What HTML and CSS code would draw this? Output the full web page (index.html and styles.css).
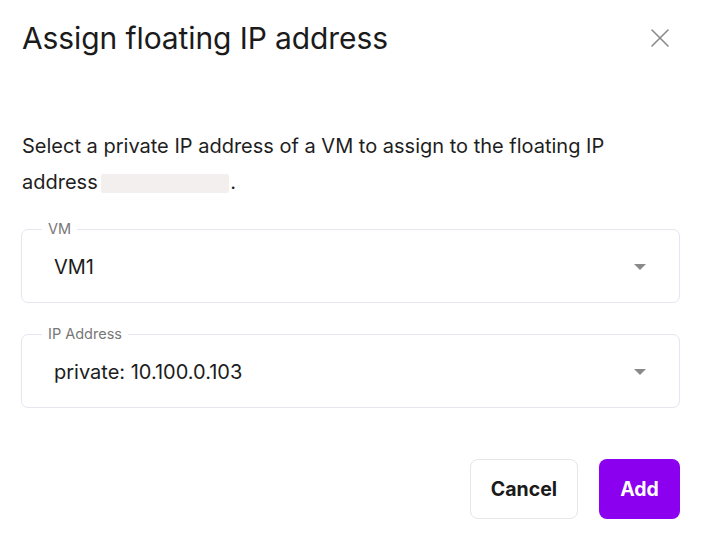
FILE: index.html
```html
<!DOCTYPE html>
<html lang="en">
<head>
<meta charset="utf-8">
<title>Assign floating IP address</title>
<link rel="stylesheet" href="styles.css">
</head>
<body>
<div class="dialog">
  <header class="dialog-header">
    <h1 class="dialog-title">Assign floating IP address</h1>
    <button class="close-btn" aria-label="Close">
      <svg width="20" height="20" viewBox="0 0 20 20"><path d="M2 2 L18 18 M18 2 L2 18" stroke="#8a8a8a" stroke-width="1.6" fill="none" stroke-linecap="round"/></svg>
    </button>
  </header>
  <p class="dialog-text">Select a private IP address of a VM to assign to the floating IP address <span class="redacted"></span>.</p>
  <fieldset class="field field-vm">
    <legend class="field-label">VM</legend>
    <div class="field-row">
      <span class="field-value">VM1</span>
      <span class="caret"></span>
    </div>
  </fieldset>
  <fieldset class="field field-ip">
    <legend class="field-label">IP Address</legend>
    <div class="field-row">
      <span class="field-value">private: 10.100.0.103</span>
      <span class="caret"></span>
    </div>
  </fieldset>
  <div class="actions">
    <button class="btn btn-cancel">Cancel</button>
    <button class="btn btn-add">Add</button>
  </div>
</div>
</body>
</html>
```
FILE: styles.css
```css
* { box-sizing: border-box; }
html, body { margin: 0; padding: 0; background: #ffffff; }
body { font-family: Inter, "Noto Sans", sans-serif; color: #1a1a1a; }

.dialog {
  width: 710px;
  height: 558px;
  padding: 18px 30px 0 21px;
}

.dialog-header {
  display: flex;
  justify-content: space-between;
  align-items: center;
}
.dialog-title {
  margin: 0;
  font-size: 30px;
  font-weight: 400;
  line-height: 40px;
  color: #1b1b1b;
  padding-left: 1px;
  letter-spacing: -0.1px;
}
.close-btn {
  background: none;
  border: none;
  padding: 0;
  margin-right: 10px;
  width: 20px;
  height: 20px;
  display: flex;
}

.dialog-text {
  margin: 70px 0 0 1px;
  font-size: 20px;
  line-height: 36px;
  color: #1e1e1e;
  width: 615px;
}
.redacted {
  display: inline-block;
  width: 128px;
  height: 19px;
  background: #f3efef;
  border-radius: 2px;
  vertical-align: -4px;
  margin-left: -2px;
  margin-right: 1px;
}

.field {
  margin: 0;
  padding: 0 0 0 20px;
  border: 1px solid #e4e6f0;
  border-radius: 7px;
  height: 81px;
  min-width: 0;
}
.field-vm { margin-top: 22px; }
.field-ip { margin-top: 24px; }
.field-label {
  padding: 0 6px;
  margin-left: 0;
  font-size: 14.5px;
  line-height: 14px;
  color: #777;
}
.field-row {
  display: flex;
  align-items: center;
  justify-content: space-between;
  height: 62px;
  padding: 0 33px 0 12px;
}
.field-value {
  font-size: 20px;
  color: #1c1c1c;
}
.caret {
  width: 0;
  height: 0;
  border-left: 6px solid transparent;
  border-right: 6px solid transparent;
  border-top: 6px solid #8a8a8a;
}

.actions {
  display: flex;
  justify-content: flex-end;
  gap: 21px;
  margin-top: 51px;
}
.btn {
  font-family: Inter, "Noto Sans", sans-serif;
  font-size: 19.5px;
  font-weight: 700;
  height: 60px;
  border-radius: 8px;
  cursor: pointer;
}
.btn-cancel {
  width: 108px;
  background: #fff;
  border: 1px solid #e6e6e6;
  color: #1a1a1a;
}
.btn-add {
  width: 81px;
  background: #8a00ef;
  border: none;
  color: #fff;
}
```
